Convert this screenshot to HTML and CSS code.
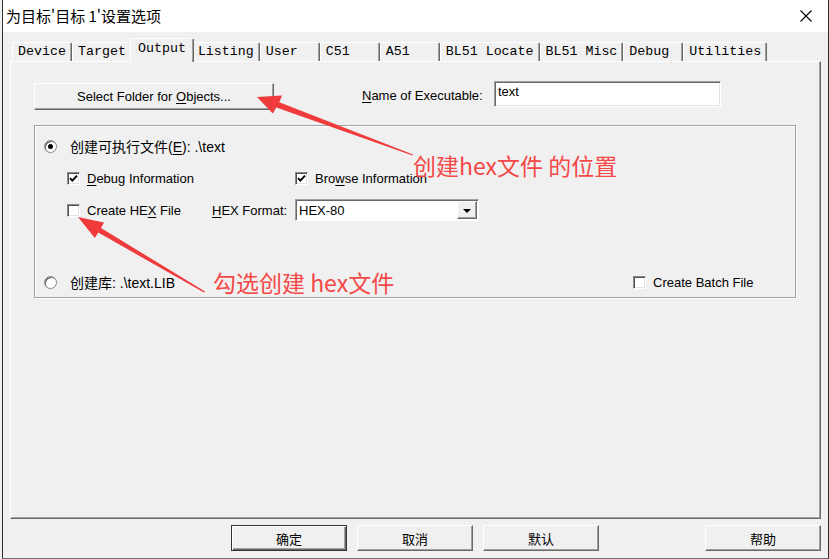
FILE: index.html
```html
<!DOCTYPE html>
<html lang="zh-CN">
<head>
<meta charset="utf-8">
<title>为目标'目标 1'设置选项</title>
<link rel="stylesheet" href="styles.css">
</head>
<body>
<div class="window">
  <div class="titlebar">
    <span class="title">为目标'目标 1'设置选项</span>
    <svg class="close" width="12" height="12" viewBox="0 0 12 12"><path d="M0.5 0.5 L11.5 11.5 M11.5 0.5 L0.5 11.5" stroke="#000" stroke-width="1.1" fill="none"/></svg>
  </div>
  <div class="content">
    <div class="tabs">
      <div class="tab">Device</div>
      <div class="tab">Target</div>
      <div class="tab active">Output</div>
      <div class="tab">Listing</div>
      <div class="tab">User</div>
      <div class="tab">C51</div>
      <div class="tab">A51</div>
      <div class="tab">BL51 Locate</div>
      <div class="tab">BL51 Misc</div>
      <div class="tab">Debug</div>
      <div class="tab">Utilities</div>
    </div>
    <div class="panel">
      <div class="row-top">
        <div class="btn folder"><span>Select Folder for <u>O</u>bjects...</span></div>
        <div class="exe-label"><u>N</u>ame of Executable:</div>
        <div class="textbox">text</div>
      </div>
      <div class="group">
        <div class="grow row-a">
          <span class="radio on"></span>
          <span class="rlbl">创建可执行文件(<u>E</u>): .\text</span>
        </div>
        <div class="grow row-b">
          <div class="cb-item w228">
            <span class="check on"><svg width="11" height="11" viewBox="0 0 11 11"><path d="M2 5.2 L4.3 7.6 L9 2.6" stroke="#000" stroke-width="1.9" fill="none"/></svg></span>
            <span class="clbl"><u>D</u>ebug Information</span>
          </div>
          <div class="cb-item">
            <span class="check on"><svg width="11" height="11" viewBox="0 0 11 11"><path d="M2 5.2 L4.3 7.6 L9 2.6" stroke="#000" stroke-width="1.9" fill="none"/></svg></span>
            <span class="clbl">Bro<u>w</u>se Information</span>
          </div>
        </div>
        <div class="grow row-c">
          <div class="cb-item w145">
            <span class="check"></span>
            <span class="clbl">Create HE<u>X</u> File</span>
          </div>
          <div class="fmt-label"><u>H</u>EX Format:</div>
          <div class="select">
            <span class="sel-text">HEX-80</span>
            <span class="dd"><span class="tri"></span></span>
          </div>
        </div>
        <div class="grow row-d">
          <span class="radio"></span>
          <span class="rlbl">创建库: .\text.LIB</span>
          <div class="cb-item batch">
            <span class="check"></span>
            <span class="clbl">Create Batch File</span>
          </div>
        </div>
      </div>
    </div>
    <div class="footer">
      <div class="btn fbtn default">确定</div>
      <div class="btn fbtn">取消</div>
      <div class="btn fbtn">默认</div>
      <div class="btn fbtn help">帮助</div>
    </div>
  </div>
</div>

<svg class="arrows" width="829" height="559" viewBox="0 0 829 559">
  <polygon points="257,97 282,95.5 279.3,102.3 413,154.4 412.6,155.6 276.3,107.4 272.8,113.6" fill="#ef3b3b"/>
  <polygon points="78,217 104,222.5 101,228 205,291.5 204,292.6 98.3,232.6 94.8,238" fill="#ef3b3b"/>
</svg>
<div class="note note1">创建hex文件 的位置</div>
<div class="note note2">勾选创建 hex文件</div>
</body>
</html>
```

FILE: styles.css
```css
* { box-sizing: border-box; }
html, body { margin: 0; padding: 0; }
body {
  width: 829px;
  height: 559px;
  background: #f0f0f0;
  position: relative;
  overflow: hidden;
  font-family: "Liberation Sans", "Noto Sans CJK SC", sans-serif;
  font-size: 13px;
  color: #000;
}
u { text-decoration: underline; text-underline-offset: 2px; }

.window {
  margin-left: 2px;
  width: 827px;
  height: 559px;
  border-left: 1px solid #2f2f2f;
  border-right: 1px solid #2f2f2f;
  border-bottom: 1px solid #707070;
  background: #f0f0f0;
  display: flex;
  flex-direction: column;
}

.titlebar {
  height: 32px;
  background: #fff;
  display: flex;
  align-items: center;
  justify-content: space-between;
  padding: 0 16px 0 3px;
}
.title {
  font-family: "Noto Sans CJK SC", sans-serif;
  font-size: 15px;
  line-height: 20px;
  color: #000;
}
.close { display: block; }

.content {
  flex: 1;
  display: flex;
  flex-direction: column;
  padding: 6px 7px 0 7px;
}

.tabs {
  display: flex;
  align-items: flex-end;
  height: 24px;
  margin-left: 2px;
  margin-bottom: -1px;
  position: relative;
  z-index: 1;
}
.tab {
  min-width: 60px;
  height: 19px;
  margin-bottom: 1px;
  padding: 0 5px;
  border-top: 1px solid #fff;
  border-left: 1px solid #fff;
  border-right: 1px solid #696969;
  box-shadow: inset -1px 0 #a0a0a0;
  border-radius: 2px 2px 0 0;
  background: #f0f0f0;
  font-family: "Liberation Mono", monospace;
  font-size: 13.3px;
  line-height: 17px;
  white-space: nowrap;
}
.tab.active {
  height: 24px;
  margin: 0 -2px;
  padding: 0 7px;
  line-height: 19px;
  position: relative;
  z-index: 2;
}

.panel {
  height: 458px;
  border: 1px solid;
  border-color: #fff #696969 #696969 #fff;
  box-shadow: inset -1px -1px #a0a0a0;
  background: #f0f0f0;
}

.btn {
  background: #f0f0f0;
  border: 1px solid;
  border-color: #fff #696969 #696969 #fff;
  box-shadow: inset -1px -1px #a0a0a0;
  display: flex;
  align-items: center;
  justify-content: center;
  white-space: nowrap;
}

.row-top {
  display: flex;
  align-items: flex-start;
  margin: 19px 0 0 23px;
}
.folder {
  margin-top: 2px;
  width: 240px;
  height: 27px;
}
.exe-label {
  margin-left: 88px;
  width: 132px;
  padding-top: 2px;
  line-height: 26px;
  white-space: nowrap;
}
.textbox {
  width: 227px;
  height: 26px;
  background: #fff;
  border: 1px solid;
  border-color: #a0a0a0 #fff #fff #a0a0a0;
  box-shadow: inset 1px 1px #696969, inset -1px -1px #e3e3e3;
  padding: 2px 3px;
  line-height: 16px;
}

.group {
  margin: 15px 0 0 23px;
  width: 762px;
  height: 173px;
  border: 1px solid #a0a0a0;
  box-shadow: inset 1px 1px #fff, 1px 1px #fff;
  padding: 10px 0 0 9px;
}
.grow {
  display: flex;
  align-items: center;
  height: 20px;
}
.row-b { margin-top: 12px; padding-left: 23px; }
.row-c { margin-top: 11px; padding-left: 23px; height: 22px; }
.row-d { margin-top: 51px; }

.radio {
  width: 13px;
  height: 13px;
  border-radius: 50%;
  background: #fff;
  border: 1px solid #8a8a8a;
  box-shadow: inset 1px 1px #5a5a5a, 0 0 0 0.5px #e8e8e8;
  display: flex;
  align-items: center;
  justify-content: center;
  flex: none;
}
.radio.on::after {
  content: "";
  width: 5px;
  height: 5px;
  border-radius: 50%;
  background: #000;
}
.rlbl {
  margin-left: 13px;
  font-size: 14px;
  white-space: nowrap;
}

.cb-item {
  display: flex;
  align-items: center;
}
.w228 { width: 228px; }
.w145 { width: 145px; }
.check {
  width: 13px;
  height: 13px;
  background: #fff;
  border: 1px solid;
  border-color: #8a8a8a #fff #fff #8a8a8a;
  box-shadow: inset 1px 1px #505050, inset -1px -1px #e3e3e3;
  display: flex;
  align-items: center;
  justify-content: center;
  flex: none;
}
.check svg { display: block; }
.clbl {
  margin-left: 7px;
  white-space: nowrap;
}
.batch {
  margin-left: auto;
  width: 162px;
}

.fmt-label {
  width: 83px;
  white-space: nowrap;
}
.select {
  width: 184px;
  height: 22px;
  display: flex;
  align-items: center;
  background: #fff;
  border: 1px solid;
  border-color: #a0a0a0 #fff #fff #a0a0a0;
  box-shadow: inset 1px 1px #696969;
  padding: 1px 1px 1px 3px;
}
.sel-text { flex: 1; }
.dd {
  width: 20px;
  height: 18px;
  background: #f0f0f0;
  border: 1px solid;
  border-color: #fff #696969 #696969 #fff;
  box-shadow: inset -1px -1px #a0a0a0;
  display: flex;
  align-items: center;
  justify-content: center;
}
.tri {
  width: 0;
  height: 0;
  border-left: 4px solid transparent;
  border-right: 4px solid transparent;
  border-top: 4px solid #000;
  margin-top: 1px;
}

.footer {
  display: flex;
  gap: 10px;
  margin-top: 6px;
  padding-left: 221px;
}
.fbtn {
  width: 116px;
  height: 26px;
  font-family: "Noto Sans CJK SC", sans-serif;
  font-size: 13px;
}
.fbtn.default {
  border: 1px solid #333;
  box-shadow: inset 1px 1px #fff, inset -1px -1px #696969, inset -2px -2px #a0a0a0;
}
.fbtn.help { margin-left: auto; }

.arrows {
  position: absolute;
  left: 0;
  top: 0;
  pointer-events: none;
}
.note {
  position: absolute;
  font-family: "Noto Sans CJK SC", sans-serif;
  font-size: 23px;
  line-height: 26px;
  color: #f54848;
  white-space: nowrap;
}
.note1 { left: 413px; top: 152px; }
.note2 { left: 213px; top: 269px; }
```
